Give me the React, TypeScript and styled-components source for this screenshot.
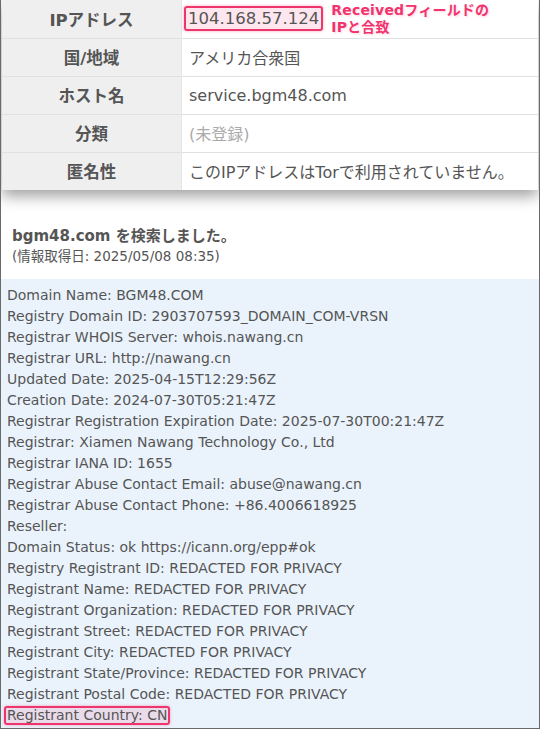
import styled, { createGlobalStyle } from 'styled-components'

const GlobalStyle = createGlobalStyle`
  html, body {
    margin: 0;
    padding: 0;
    background: #fff;
  }
`

const FONT = `"DejaVu Sans", "Noto Sans CJK JP", sans-serif`

const Frame = styled.div`
  width: 540px;
  height: 729px;
  box-sizing: border-box;
  border: 1px solid #6a6a6a;
  border-top: none;
  overflow: hidden;
  font-family: ${FONT};
  color: #555;
  display: flex;
  flex-direction: column;
`

const InfoTable = styled.table`
  width: calc(100% - 2px);
  margin: 0 1px;
  border-collapse: collapse;
  box-shadow: 0 6px 14px rgba(0, 0, 0, 0.38);
  background: #fff;
  position: relative;
  z-index: 1;

  tr {
    height: 38px;
    border-bottom: 1px solid #e0e0e0;
  }

  tr:last-child {
    border-bottom: none;
  }
`

const Label = styled.th`
  width: 179px;
  background: #efefef;
  border-right: 1px solid #e6e6e6;
  font-size: 16.5px;
  font-weight: bold;
  color: #555;
  text-align: center;
  padding: 0;
`

const Value = styled.td<{ $muted?: boolean }>`
  padding: 0 0 0 7px;
  font-size: 16px;
  color: ${({ $muted }) => ($muted ? '#aaa' : '#555')};
  white-space: nowrap;
`

const ValueRow = styled.div`
  display: flex;
  align-items: center;
  gap: 8px;
`

const Highlight = styled.span<{ $size: 'lg' | 'sm' }>`
  display: inline-block;
  border: 2px solid #ee356c;
  border-radius: 3px;
  background: rgba(238, 53, 108, 0.12);
  box-shadow: 0 0 3px rgba(238, 53, 108, 0.45);
  margin-left: ${({ $size }) => ($size === 'lg' ? '-5px' : '-3px')};
  padding: ${({ $size }) => ($size === 'lg' ? '0 2px' : '0 1px')};
  line-height: ${({ $size }) => ($size === 'lg' ? '21px' : '15px')};
  font-size: ${({ $size }) => ($size === 'lg' ? '16.5px' : '14px')};
`

const Note = styled.div`
  font-size: 14px;
  font-weight: bold;
  line-height: 17px;
  letter-spacing: 0.2px;
  color: #f2336d;
  text-shadow: 0 0 3px rgba(255, 255, 255, 0.9), 1px 1px 2px rgba(242, 51, 109, 0.25);
`

const Summary = styled.div`
  padding: 36px 11px 13px;
  background: #fff;
`

const Title = styled.div`
  font-size: 15px;
  font-weight: bold;
  line-height: 20px;
  color: #555;
`

const Fetched = styled.div`
  font-size: 13.5px;
  line-height: 20px;
  color: #555;
`

const Whois = styled.div`
  flex: 1;
  background: #eaf3fc;
  padding: 6px 0 0 6px;
  font-size: 14px;
  line-height: 21px;
  color: #555;
  white-space: nowrap;
`

const WhoisLine = styled.div`
  height: 21px;
`

const INFO = [
  { label: '国/地域', value: 'アメリカ合衆国' },
  { label: 'ホスト名', value: 'service.bgm48.com' },
  { label: '分類', value: '(未登録)', muted: true },
  { label: '匿名性', value: 'このIPアドレスはTorで利用されていません。' },
]

const WHOIS_LINES = [
  'Domain Name: BGM48.COM',
  'Registry Domain ID: 2903707593_DOMAIN_COM-VRSN',
  'Registrar WHOIS Server: whois.nawang.cn',
  'Registrar URL: http://nawang.cn',
  'Updated Date: 2025-04-15T12:29:56Z',
  'Creation Date: 2024-07-30T05:21:47Z',
  'Registrar Registration Expiration Date: 2025-07-30T00:21:47Z',
  'Registrar: Xiamen Nawang Technology Co., Ltd',
  'Registrar IANA ID: 1655',
  'Registrar Abuse Contact Email: abuse@nawang.cn',
  'Registrar Abuse Contact Phone: +86.4006618925',
  'Reseller:',
  'Domain Status: ok https://icann.org/epp#ok',
  'Registry Registrant ID: REDACTED FOR PRIVACY',
  'Registrant Name: REDACTED FOR PRIVACY',
  'Registrant Organization: REDACTED FOR PRIVACY',
  'Registrant Street: REDACTED FOR PRIVACY',
  'Registrant City: REDACTED FOR PRIVACY',
  'Registrant State/Province: REDACTED FOR PRIVACY',
  'Registrant Postal Code: REDACTED FOR PRIVACY',
]

export default function App() {
  return (
    <>
      <GlobalStyle />
      <Frame>
        <InfoTable>
          <tbody>
            <tr>
              <Label>IPアドレス</Label>
              <Value>
                <ValueRow>
                  <Highlight $size="lg">104.168.57.124</Highlight>
                  <Note>
                    Receivedフィールドの
                    <br />
                    IPと合致
                  </Note>
                </ValueRow>
              </Value>
            </tr>
            {INFO.map((row) => (
              <tr key={row.label}>
                <Label>{row.label}</Label>
                <Value $muted={row.muted}>{row.value}</Value>
              </tr>
            ))}
          </tbody>
        </InfoTable>

        <Summary>
          <Title>bgm48.com を検索しました。</Title>
          <Fetched>(情報取得日: 2025/05/08 08:35)</Fetched>
        </Summary>

        <Whois>
          {WHOIS_LINES.map((line, idx) => (
            <WhoisLine key={idx}>{line}</WhoisLine>
          ))}
          <WhoisLine>
            <Highlight $size="sm">Registrant Country: CN</Highlight>
          </WhoisLine>
        </Whois>
      </Frame>
    </>
  )
}
